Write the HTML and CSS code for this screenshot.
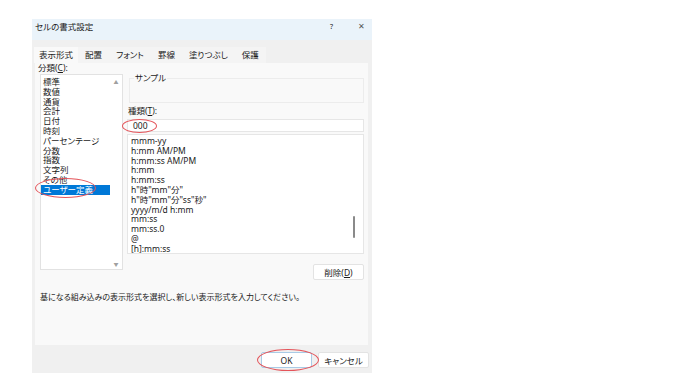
FILE: index.html
```html
<!DOCTYPE html>
<html lang="ja">
<head>
    <meta charset="UTF-8">
    <meta name="viewport" content="width=device-width, initial-scale=1.0">
    <title>セルの書式設定</title>
    <link rel="stylesheet" href="styles.css">
</head>
<body>
<div class="page">
    <div class="dialog">
        <div class="titlebar">
            <span class="title">セルの書式設定</span>
            <span class="tb-help">?</span>
            <span class="tb-close">✕</span>
        </div>
        <div class="tabs">
            <div class="tab active">表示形式</div>
            <div class="tab">配置</div>
            <div class="tab">フォント</div>
            <div class="tab">罫線</div>
            <div class="tab">塗りつぶし</div>
            <div class="tab">保護</div>
        </div>
        <div class="panel">
            <div class="main">
                <div class="cat">
                    <div class="lbl">分類(<u>C</u>):</div>
                    <div class="catbox">
                        <ul class="catlist">
                            <li>標準</li>
                            <li>数値</li>
                            <li>通貨</li>
                            <li>会計</li>
                            <li>日付</li>
                            <li>時刻</li>
                            <li>パーセンテージ</li>
                            <li>分数</li>
                            <li>指数</li>
                            <li>文字列</li>
                            <li>その他</li>
                            <li class="sel">ユーザー定義</li>
                        </ul>
                        <div class="vscroll"><span>▲</span><span>▼</span></div>
                    </div>
                </div>
                <div class="detail">
                    <div class="sample"><span class="legend">サンプル</span></div>
                    <div class="lbl type-lbl">種類(<u>T</u>):</div>
                    <div class="typebox">000</div>
                    <div class="fmtbox">
                        <ul class="fmtlist">
                            <li>mmm-yy</li>
                            <li>h:mm AM/PM</li>
                            <li>h:mm:ss AM/PM</li>
                            <li>h:mm</li>
                            <li>h:mm:ss</li>
                            <li>h"時"mm"分"</li>
                            <li>h"時"mm"分"ss"秒"</li>
                            <li>yyyy/m/d h:mm</li>
                            <li>mm:ss</li>
                            <li>mm:ss.0</li>
                            <li>@</li>
                            <li>[h]:mm:ss</li>
                        </ul>
                        <div class="fmtscroll"><div class="thumb"></div></div>
                    </div>
                    <div class="delrow"><button class="btn">削除(<u>D</u>)</button></div>
                </div>
            </div>
            <p class="desc">基になる組み込みの表示形式を選択し、新しい表示形式を入力してください。</p>
        </div>
        <div class="footer">
            <button class="btn ok">OK</button>
            <button class="btn">キャンセル</button>
        </div>
    </div>
    <!-- red marks -->
    <span class="mark mark-cat"></span>
    <span class="mark mark-type"></span>
    <span class="mark mark-ok"></span>
</div>
</body>
</html>
```

FILE: styles.css
```css
*{
    box-sizing: border-box;
}
body{
    margin: 0;
    background: #fff;
    font-family: "Noto Sans", "Noto Sans CJK JP", sans-serif;
    font-feature-settings: "palt";
    color: #1a1a1a;
}
.page{
    position: relative;
    width: 700px;
    height: 392px;
    padding: 19px 0 0 32px;
}
.dialog{
    width: 340px;
    height: 354px;
    background: #f0f0f0;
    display: flex;
    flex-direction: column;
}
.titlebar{
    height: 21px;
    background: #eaf3fa;
    display: flex;
    align-items: flex-start;
    padding: 2px 0 0 3px;
    font-size: 8.5px;
    line-height: 11px;
}
.title{
    flex: 1;
}
.tb-help{
    width: 28px;
    font-size: 7px;
}
.tb-close{
    width: 14px;
    font-size: 7.5px;
    color: #555;
}
.tabs{
    display: flex;
    margin: 7px 0 0 2px;
    height: 16px;
}
.tab{
    font-size: 8.5px;
    line-height: 16px;
    padding: 0 7px;
    background: #f4f4f4;
}
.tab.active{
    background: #f9f9f9;
    padding: 0 5px;
}
.panel{
    margin: 0 4px 0 3px;
    height: 282px;
    background: #f9f9f9;
    padding: 0 0 0 3px;
}
.main{
    display: flex;
}
.lbl{
    font-size: 8.5px;
    line-height: 10px;
}
.cat{
    width: 89px;
}
.cat .lbl{
    height: 11px;
}
.catbox{
    margin: 0 0 0 2px;
    width: 83px;
    height: 196px;
    background: #fff;
    border: 1px solid #e2e2e2;
    display: flex;
}
.catlist{
    list-style: none;
    margin: 0;
    padding: 2px 0 0 0;
    flex: 1;
}
.catlist li{
    font-size: 8.5px;
    line-height: 9.8px;
    height: 9.8px;
    padding-left: 2px;
    white-space: nowrap;
}
.catlist li.sel{
    background: #0078d7;
    color: #fff;
}
.vscroll{
    width: 12px;
    display: flex;
    flex-direction: column;
    justify-content: space-between;
    align-items: center;
    font-size: 5px;
    color: #a0a0a0;
    padding: 3px 0 2px;
}
.detail{
    width: 237px;
    padding-top: 15px;
}
.sample{
    height: 25px;
    border: 1px solid #ececec;
    position: relative;
    margin-left: 2px;
}
.legend{
    position: absolute;
    top: -6px;
    left: 4px;
    padding: 0 1px;
    background: #f9f9f9;
    font-size: 8.5px;
    line-height: 10px;
}
.type-lbl{
    margin-top: 3px;
    padding-left: 1px;
}
.typebox{
    margin-top: 3px;
    height: 13px;
    background: #fff;
    border: 1px solid #e6e6e6;
    font-size: 8.5px;
    line-height: 11px;
    padding-left: 5px;
}
.fmtbox{
    margin-top: 2px;
    height: 120px;
    background: #fff;
    border: 1px solid #e6e6e6;
    display: flex;
    overflow: hidden;
}
.fmtlist{
    list-style: none;
    margin: 0;
    padding: 1px 0 0 3px;
    flex: 1;
}
.fmtlist li{
    font-size: 8.5px;
    line-height: 9.8px;
    height: 9.8px;
    white-space: nowrap;
}
.fmtscroll{
    width: 10px;
    padding-top: 81px;
}
.thumb{
    width: 2px;
    height: 22px;
    background: #8a8a8a;
    border-radius: 1px;
}
.delrow{
    display: flex;
    justify-content: flex-end;
    margin-top: 10px;
}
.btn{
    font-family: inherit;
    font-feature-settings: "palt";
    font-size: 8.5px;
    background: #fff;
    border: 1px solid #e3e3e3;
    border-radius: 2px;
    color: #1a1a1a;
    padding: 0;
    cursor: default;
}
.delrow .btn{
    width: 51px;
    height: 16px;
}
.desc{
    margin: 12px 0 0 2px;
    font-size: 8px;
    line-height: 10px;
}
.footer{
    display: flex;
    justify-content: flex-end;
    gap: 6px;
    padding: 7px 3px 0 0;
}
.footer .btn{
    width: 51px;
    height: 16px;
}
.footer .ok{
    border-color: #a9cbe6;
}
.mark{
    position: absolute;
    border: 1.5px solid #e4545a;
    border-radius: 50%;
}
.mark-cat{
    left: 35px;
    top: 178px;
    width: 61px;
    height: 20px;
}
.mark-type{
    left: 122px;
    top: 119px;
    width: 35px;
    height: 14px;
}
.mark-ok{
    left: 257px;
    top: 349px;
    width: 62px;
    height: 22px;
}
```
